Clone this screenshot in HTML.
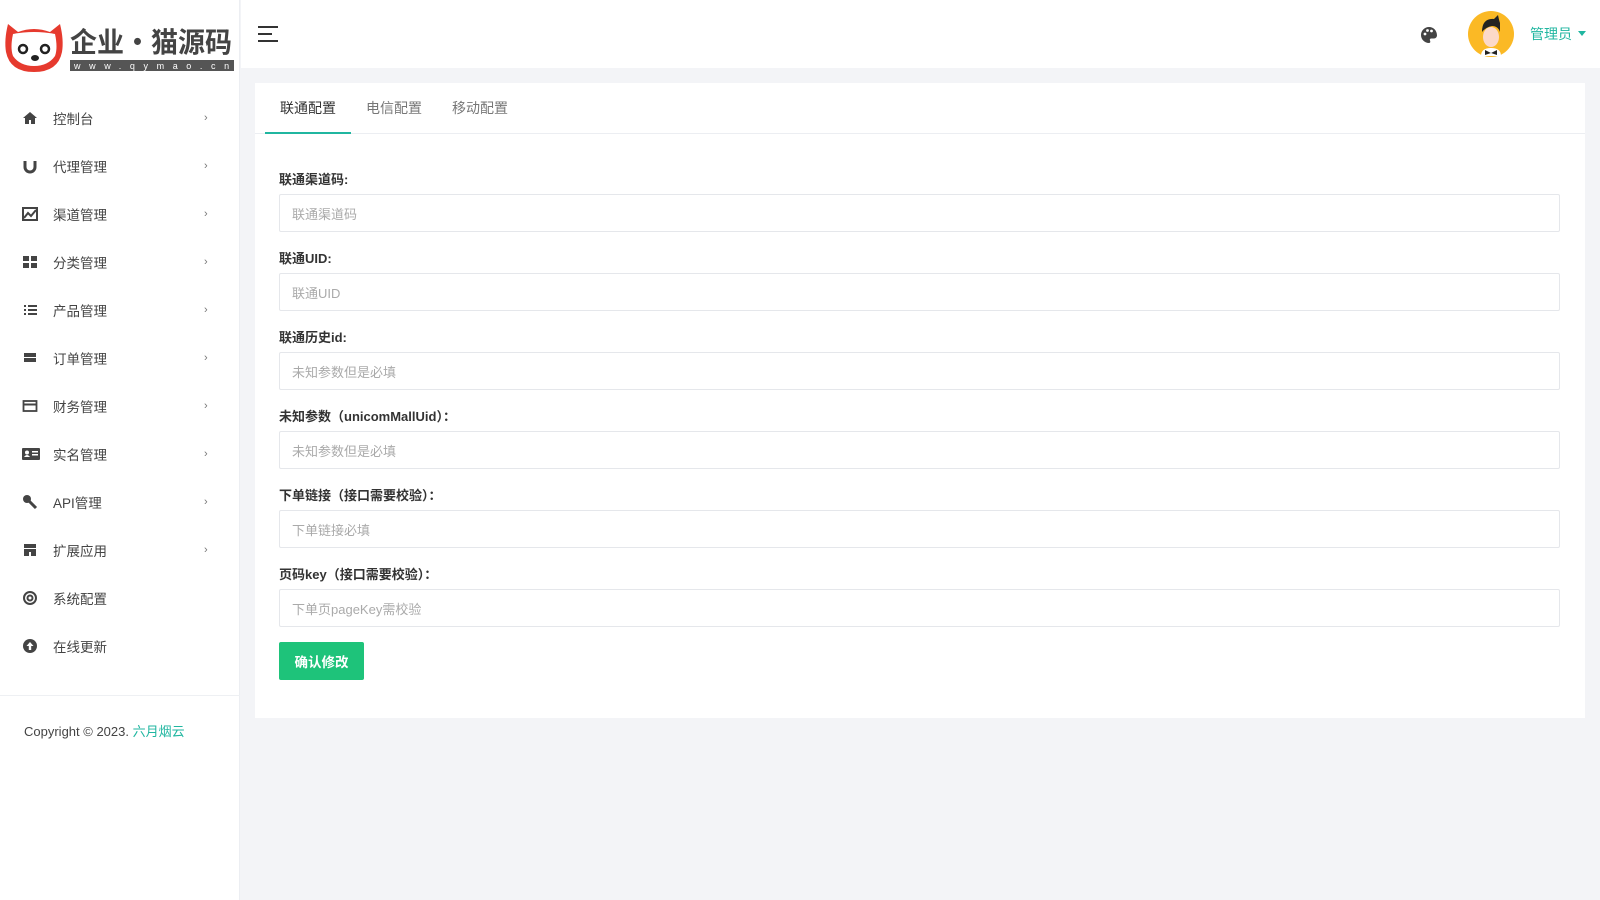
<!DOCTYPE html>
<html><head><meta charset="utf-8"><style>
*{margin:0;padding:0;box-sizing:border-box}
body{width:1600px;height:900px;background:#f3f4f7;font-family:"Liberation Sans","Noto Sans CJK SC",sans-serif;font-size:13px;color:#333;position:relative;overflow:hidden}
.side{position:absolute;left:0;top:0;width:240px;height:900px;background:#fff;border-right:1px solid #eceef2}
.logo{position:absolute;left:4px;top:20px}
.menu{position:absolute;left:0;top:94px;width:240px}
.mi{height:48px;display:flex;align-items:center;position:relative;color:#444;font-size:13.5px}
.mi svg{position:absolute;left:22px}
.mi span{position:absolute;left:53px}
.mi i{position:absolute;left:204px;font-style:normal;color:#777;font-size:11px}
.div{position:absolute;left:0;top:695px;width:240px;border-top:1px solid #eef0f3}
.copy{position:absolute;left:24px;top:721px;font-size:13px;color:#444}
.copy a{color:#20b6a0}
.head{position:absolute;left:241px;top:0;right:0;height:68px;background:#fff}
.card{position:absolute;left:255px;top:83px;width:1330px;height:635px;background:#fff}
.tabs{height:51px;border-bottom:1px solid #eceef2;position:relative}
.tab{position:absolute;top:15px;font-size:14px;color:#777}
.ul{position:absolute;left:10px;top:49px;width:86px;height:2px;background:#20b6a0}
.lab{position:absolute;left:24px;font-weight:bold;font-size:13px;color:#333}
.inp{position:absolute;left:24px;width:1281px;height:38px;border:1px solid #e5e7eb;border-radius:2px;color:#aaa;font-size:13px;padding:9px 12px}
.btn{position:absolute;left:24px;top:559px;width:85px;height:38px;background:#1ec37a;color:#fff;font-weight:bold;font-size:13.5px;display:flex;align-items:center;justify-content:center;border-radius:2px}
</style></head><body>
<div class="side">
 <div class="logo"><svg width="230" height="54" viewBox="0 0 230 54">
  <path d="M4 4 L14 12 Q30 6 46 12 L56 4 Q60 20 58 32 Q54 52 30 52 Q6 52 2 32 Q0 20 4 4Z" fill="#e63a2e"/>
  <path d="M9 14 Q30 10 51 14 Q54 28 51 36 Q44 46 30 46 Q16 46 9 36 Q6 28 9 14Z" fill="#fff"/>
  <circle cx="19" cy="29" r="4" fill="none" stroke="#222" stroke-width="2.5"/><circle cx="41" cy="29" r="4" fill="none" stroke="#222" stroke-width="2.5"/>
  <ellipse cx="31" cy="38" rx="4" ry="3" fill="#222"/>
  <text x="66" y="32" font-family="Noto Sans CJK SC,sans-serif" font-weight="bold" font-size="28" fill="#444" textLength="162" lengthAdjust="spacingAndGlyphs">企业·猫源码</text>
  <rect x="66" y="40" width="164" height="11" fill="#555"/>
  <text x="70" y="49" font-family="Liberation Sans" font-size="9" fill="#fff" letter-spacing="8.6">www.qymao.cn</text>
 </svg></div>
 <div class="menu">
  <div class="mi"><svg width="16" height="16" viewBox="0 0 16 16"><path d="M8 2L1 8h2v6h4v-4h2v4h4V8h2z" fill="#444"/></svg><span>控制台</span><i>›</i></div>
  <div class="mi"><svg width="16" height="16" viewBox="0 0 16 16"><path d="M3 3v6a5 5 0 0010 0V3" fill="none" stroke="#444" stroke-width="3"/></svg><span>代理管理</span><i>›</i></div>
  <div class="mi"><svg width="16" height="16" viewBox="0 0 16 16"><rect x="1" y="2" width="14" height="12" fill="none" stroke="#444" stroke-width="2"/><path d="M2 12l4-5 3 3 5-6" fill="none" stroke="#444" stroke-width="2"/></svg><span>渠道管理</span><i>›</i></div>
  <div class="mi"><svg width="16" height="16" viewBox="0 0 16 16"><path d="M1 2h6v5H1zM9 2h6v5H9zM1 9h6v5H1zM9 9h6v5H9z" fill="#444"/></svg><span>分类管理</span><i>›</i></div>
  <div class="mi"><svg width="16" height="16" viewBox="0 0 16 16"><path d="M2 3h2v2H2zM6 3h9v2H6zM2 7h2v2H2zM6 7h9v2H6zM2 11h2v2H2zM6 11h9v2H6z" fill="#444"/></svg><span>产品管理</span><i>›</i></div>
  <div class="mi"><svg width="16" height="16" viewBox="0 0 16 16"><path d="M2 3h12v4H2zM2 8h12v4H2z" fill="#444"/></svg><span>订单管理</span><i>›</i></div>
  <div class="mi"><svg width="16" height="16" viewBox="0 0 16 16"><rect x="1.5" y="3" width="13" height="10" fill="none" stroke="#444" stroke-width="1.8"/><path d="M1 5.5h14v2H1z" fill="#444"/></svg><span>财务管理</span><i>›</i></div>
  <div class="mi"><svg width="18" height="16" viewBox="0 0 18 16"><rect x="0" y="2" width="18" height="12" rx="1" fill="#444"/><circle cx="5" cy="6.5" r="2" fill="#fff"/><path d="M2 11q3-4 6 0zM10 5h6v1.5h-6zM10 8h6v1.5h-6z" fill="#fff"/></svg><span>实名管理</span><i>›</i></div>
  <div class="mi"><svg width="16" height="16" viewBox="0 0 16 16"><circle cx="5" cy="5" r="4" fill="#444"/><path d="M7 7l7 7" stroke="#444" stroke-width="3"/></svg><span>API管理</span><i>›</i></div>
  <div class="mi"><svg width="16" height="16" viewBox="0 0 16 16"><path d="M2 2h12v4H2zM2 7h12v7H9V10H7v4H2z" fill="#444"/></svg><span>扩展应用</span><i>›</i></div>
  <div class="mi"><svg width="16" height="16" viewBox="0 0 16 16"><circle cx="8" cy="8" r="6" fill="none" stroke="#444" stroke-width="2"/><circle cx="8" cy="8" r="2.5" fill="none" stroke="#444" stroke-width="2"/></svg><span>系统配置</span></div>
  <div class="mi"><svg width="16" height="16" viewBox="0 0 16 16"><circle cx="8" cy="8" r="7" fill="#444"/><path d="M8 4l-3.5 4h2.3v4h2.4V8h2.3z" fill="#fff"/></svg><span>在线更新</span></div>
 </div>
 <div class="div"></div>
 <div class="copy">Copyright © 2023. <a>六月烟云</a></div>
</div>
<div class="head">
 <svg style="position:absolute;left:17px;top:26px" width="21" height="16"><path d="M0 1h20M0 8h14M0 15h20" stroke="#333" stroke-width="2"/></svg>
 <svg style="position:absolute;left:1179px;top:26px" width="18" height="18" viewBox="0 0 18 18"><path d="M9 1a8 8 0 000 16c1.5 0 1.5-1.5 1-2.5s0-2 1.5-2H14a3 3 0 003-3C17 4.5 13.5 1 9 1z" fill="#444"/><circle cx="5" cy="8" r="1.4" fill="#fff"/><circle cx="7.5" cy="4.5" r="1.4" fill="#fff"/><circle cx="11.5" cy="5" r="1.4" fill="#fff"/></svg>
 <svg style="position:absolute;left:1226px;top:10px" width="48" height="48" viewBox="0 0 48 48"><circle cx="24" cy="24" r="23" fill="#fbb925"/><ellipse cx="24" cy="27" rx="8" ry="10" fill="#fcd9c9"/><path d="M15 22q0-14 12-13l4-4q1 5 2 8v9q-2-6-8-6-6 1-10 6z" fill="#222"/><path d="M14 46q0-8 10-8t10 8z" fill="#fff"/><path d="M18 40l6 3 6-3v5l-6-2-6 2z" fill="#222"/></svg>
 <span style="position:absolute;left:1289px;top:24px;color:#20b6a0;font-size:14px">管理员</span>
 <svg style="position:absolute;left:1337px;top:31px" width="8" height="5"><path d="M0 0h8L4 5z" fill="#20b6a0"/></svg>
</div>
<div class="card">
 <div class="tabs"><span class="tab" style="left:25px;color:#333">联通配置</span><span class="tab" style="left:111px">电信配置</span><span class="tab" style="left:197px">移动配置</span><div class="ul"></div></div>
 <div class="lab" style="top:86px">联通渠道码:</div><div class="inp" style="top:111px">联通渠道码</div>
 <div class="lab" style="top:165px">联通UID:</div><div class="inp" style="top:190px">联通UID</div>
 <div class="lab" style="top:244px">联通历史id:</div><div class="inp" style="top:269px">未知参数但是必填</div>
 <div class="lab" style="top:323px">未知参数（unicomMallUid）：</div><div class="inp" style="top:348px">未知参数但是必填</div>
 <div class="lab" style="top:402px">下单链接（接口需要校验）：</div><div class="inp" style="top:427px">下单链接必填</div>
 <div class="lab" style="top:481px">页码key（接口需要校验）：</div><div class="inp" style="top:506px">下单页pageKey需校验</div>
 <div class="btn">确认修改</div>
</div>
</body></html>
